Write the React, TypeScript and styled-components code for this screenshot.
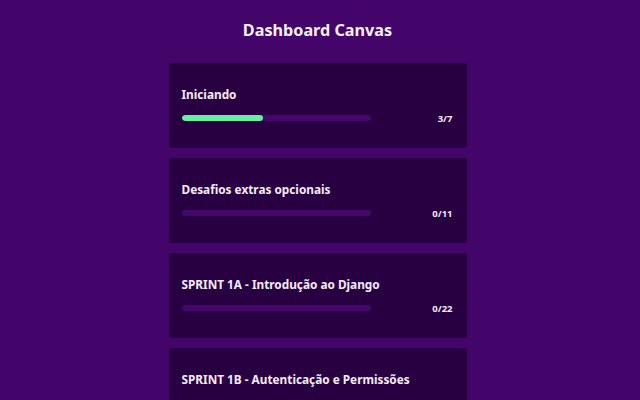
import React from "react";
import styled, { createGlobalStyle } from "styled-components";

const Global = createGlobalStyle`
  html, body { margin: 0; padding: 0; background: #43056a; }
  body { font-family: "Noto Sans", "Open Sans", sans-serif; color: #f3ecf7; }
`;

const Page = styled.div`
  min-height: 400px;
  display: flex;
  flex-direction: column;
  align-items: center;
  padding: 16px 5px 0 0;
  box-sizing: border-box;
`;

const Title = styled.h1`
  margin: 0 0 19px;
  font-size: 16.2px;
  line-height: 28px;
  font-weight: 700;
  color: #f6f0fa;
`;

const List = styled.div`
  width: 298px;
  display: flex;
  flex-direction: column;
  gap: 10px;
`;

const Card = styled.div`
  height: 85px;
  box-sizing: border-box;
  background: #280042;
  border-radius: 3px;
  padding: 23px 14px 0 13px;
  display: flex;
  flex-direction: column;
  gap: 10px;
`;

const CardTitle = styled.div`
  font-size: 11.8px;
  line-height: 16px;
  font-weight: 700;
  color: #f3ecf7;
`;

const Row = styled.div`
  display: flex;
  align-items: center;
  justify-content: space-between;
  height: 12px;
`;

const Track = styled.div`
  width: 189px;
  height: 6px;
  border-radius: 3px;
  background: #45066c;
  overflow: hidden;
`;

const Fill = styled.div`
  height: 100%;
  border-radius: 3px;
  background: #62f2a2;
`;

const Count = styled.span`
  font-size: 9.5px;
  font-weight: 700;
  color: #f3ecf7;
`;

const items = [
  { title: "Iniciando", done: 3, total: 7 },
  { title: "Desafios extras opcionais", done: 0, total: 11 },
  { title: "SPRINT 1A - Introdução ao Django", done: 0, total: 22 },
  { title: "SPRINT 1B - Autenticação e Permissões", done: 0, total: 14 },
];

export default function App() {
  return (
    <>
      <Global />
      <Page>
        <Title>Dashboard Canvas</Title>
        <List>
          {items.map((it) => (
            <Card key={it.title}>
              <CardTitle>{it.title}</CardTitle>
              <Row>
                <Track>
                  <Fill style={{ width: `${(it.done / it.total) * 100}%` }} />
                </Track>
                <Count>
                  {it.done}/{it.total}
                </Count>
              </Row>
            </Card>
          ))}
        </List>
      </Page>
    </>
  );
}
